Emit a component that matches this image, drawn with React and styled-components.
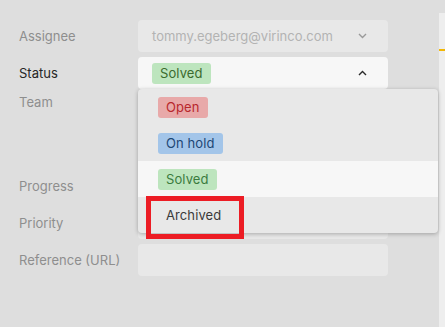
import React from "react";
import styled, { createGlobalStyle } from "styled-components";

const Global = createGlobalStyle`
  html, body { margin: 0; padding: 0; background: #dedede; }
  body { font-family: Inter, "Noto Sans", sans-serif; font-size: 13px; }
  * { box-sizing: border-box; }
`;

const Page = styled.div`
  display: flex;
  width: 445px;
  height: 327px;
  overflow: hidden;
  background: #dedede;
`;

const FormArea = styled.div`
  width: 439px;
  flex: none;
  padding: 20px 0 0 19px;
  position: relative;
`;

const SidePanel = styled.div`
  flex: 1;
  margin-top: 13px;
  background: #eeeeee;
`;

const SideHeader = styled.div`
  height: 38px;
  border-bottom: 2px solid #f2b705;
`;

const Form = styled.div`
  display: grid;
  grid-template-columns: 119px 250px;
  row-gap: 5px;
`;

const Label = styled.div`
  color: ${(p) => (p.$active ? "#262626" : "#8e8e8e")};
  display: flex;
  align-items: ${(p) => (p.$top ? "flex-start" : "center")};
  height: ${(p) => (p.$top ? "16px" : "32px")};
  white-space: nowrap;
`;

const Field = styled.div`
  position: relative;
  height: ${(p) => p.$h || 32}px;
  border-radius: 4px;
  background: ${(p) => (p.$open ? "#f7f7f7" : "#e8e8e8")};
  display: flex;
  align-items: center;
  padding: 0 14px 0 14px;
  color: #b3b3b3;
`;

const Value = styled.span`
  flex: 1;
  white-space: nowrap;
`;

const Badge = styled.span`
  display: inline-flex;
  align-items: center;
  height: 21px;
  padding: 0 8px;
  border-radius: 3px;
  background: ${(p) => p.$bg};
  color: ${(p) => p.$fg};
  font-size: 13px;
  letter-spacing: 0.1px;
  white-space: nowrap;
`;

const Chevron = styled.svg`
  width: 9px;
  height: 6px;
  flex: none;
  margin-right: 7px;
`;

const Menu = styled.div`
  position: absolute;
  left: 0;
  top: 32px;
  width: 300px;
  background: #e8e8e8;
  border-radius: 4px;
  box-shadow: 0 1px 4px rgba(0, 0, 0, 0.28);
  z-index: 5;
  overflow: hidden;
`;

const Option = styled.div`
  height: 36px;
  display: flex;
  align-items: center;
  padding-left: 20px;
  background: ${(p) => (p.$hl ? "#f7f7f7" : "transparent")};
`;

const Highlight = styled.div`
  position: absolute;
  left: 146px;
  top: 196px;
  width: 98px;
  height: 43px;
  border: 5px solid #ec1c24;
  z-index: 6;
  pointer-events: none;
`;

const statuses = [
  { label: "Open", bg: "#e8a9a9", fg: "#b8282d" },
  { label: "On hold", bg: "#a3c5e9", fg: "#1d4775" },
  { label: "Solved", bg: "#bde5be", fg: "#3b7c3e", hl: true },
  { label: "Archived", bg: "transparent", fg: "#3a3a3a" },
];

export default function App() {
  return (
    <Page>
      <Global />
      <FormArea>
        <Form>
          <Label>Assignee</Label>
          <Field>
            <Value>tommy.egeberg@virinco.com</Value>
            <Chevron viewBox="0 0 9 6">
              <polyline points="1,1 4.5,4.5 8,1" fill="none" stroke="#9a9a9a" strokeWidth="1.4" />
            </Chevron>
          </Field>

          <Label $active>Status</Label>
          <Field $open>
            <Value>
              <Badge $bg="#bde5be" $fg="#3b6b2e">Solved</Badge>
            </Value>
            <Chevron viewBox="0 0 9 6">
              <polyline points="1,5 4.5,1.5 8,5" fill="none" stroke="#2a2a2a" strokeWidth="1.4" />
            </Chevron>
            <Menu>
              {statuses.map((s) => (
                <Option key={s.label} $hl={s.hl}>
                  <Badge $bg={s.bg} $fg={s.fg}>{s.label}</Badge>
                </Option>
              ))}
            </Menu>
          </Field>

          <Label $top>Team</Label>
          <Field $h={71} />

          <Label>Progress</Label>
          <Field />

          <Label>Priority</Label>
          <Field />

          <Label>Reference (URL)</Label>
          <Field />
        </Form>
        <Highlight />
      </FormArea>
      <SidePanel>
        <SideHeader />
      </SidePanel>
    </Page>
  );
}
